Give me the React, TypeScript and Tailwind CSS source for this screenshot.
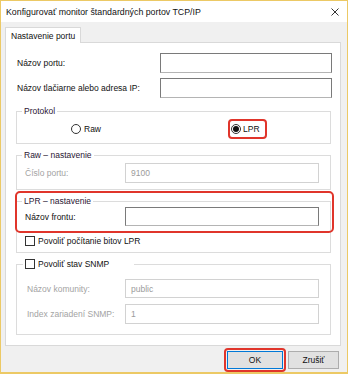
import React from "react";

function Input({ w, h = 20, disabled = false, value = "" }: { w: number; h?: number; disabled?: boolean; value?: string }) {
  return (
    <div
      className={
        disabled
          ? "bg-white border border-[#d2d2d2] flex items-center pl-[5px] text-[#9b9b9b]"
          : "bg-white border border-[#7a7a7a] border-b-[#b4b4b4] flex items-center pl-[5px]"
      }
      style={{ width: w, height: h }}
    >
      {value}
    </div>
  );
}

function Checkbox() {
  return <div className="w-[10px] h-[10px] border border-[#333333] bg-white shrink-0" />;
}

export default function App() {
  return (
    <div className="w-[348px] h-[374px] bg-[#f0f0f0] border-l border-t border-r border-b-2 border-[#ecc965] flex flex-col font-['Liberation_Sans',Arial,sans-serif] text-[8.5px] leading-[12px] text-[#111111]">
      <div className="h-[21px] bg-white flex items-center justify-between pl-[5px] pr-[8px] text-[8.8px] shrink-0">
        <span>Konfigurovať monitor štandardných portov TCP/IP</span>
        <svg width="8" height="8" viewBox="0 0 8 8">
          <path d="M0.5 0.5L7.5 7.5M7.5 0.5L0.5 7.5" stroke="#333333" strokeWidth="1" />
        </svg>
      </div>
      <div className="flex-1 flex flex-col pt-[5px] px-[4px]">
        <div className="flex">
          <div className="h-[16px] px-[5px] whitespace-nowrap bg-white border border-b-0 border-[#d9d9d9] flex items-center relative z-10 -mb-px">
            Nastavenie portu
          </div>
        </div>
        <div className="w-[336px] h-[304px] bg-white border border-[#d9d9d9] pt-[10px] pl-[10px] pr-[8px] flex flex-col">
          <div className="flex items-center justify-between">
            <span className="ml-[1px]">Názov portu:</span>
            <Input w={172} />
          </div>
          <div className="flex items-center justify-between mt-[5px]">
            <span className="ml-[1px]">Názov tlačiarne alebo adresa IP:</span>
            <Input w={172} />
          </div>

          <fieldset className="mt-[7px] mr-[1px] border border-[#dcdcdc] pb-[4px]">
            <legend className="ml-[5px] px-[2px] leading-[12px] text-[#2a1633]">Protokol</legend>
            <div className="grid grid-cols-[211px_1fr] items-center mt-[2px] h-[20px]">
              <div className="flex items-center pl-[54px] gap-[3px]">
                <div className="w-[10px] h-[10px] rounded-full border border-[#333333] bg-white" />
                <span>Raw</span>
              </div>
              <div className="flex">
                <div className="h-[20px] w-[39px] border-2 border-[#e0352b] rounded-[4px] pl-px flex items-center gap-[2px]">
                  <div className="w-[10px] h-[10px] rounded-full border border-[#333333] bg-white flex items-center justify-center">
                    <div className="w-[6px] h-[6px] rounded-full bg-[#111111]" />
                  </div>
                  <span>LPR</span>
                </div>
              </div>
            </div>
          </fieldset>

          <fieldset className="mt-[5px] mr-[1px] border border-[#dcdcdc] pb-[6px]">
            <legend className="ml-[5px] px-[2px] leading-[12px] text-[#2a1633]">Raw – nastavenie</legend>
            <div className="flex items-center mt-[2px]">
              <span className="w-[108px] pl-[8px] text-[#a3a3a3]">Číslo portu:</span>
              <Input w={194} disabled value="9100" />
            </div>
          </fieldset>

          <div className="relative mt-[5px] mr-[1px]">
            <fieldset className="border border-[#dcdcdc] pb-[4px]">
              <legend className="ml-[5px] px-[2px] leading-[12px] text-[#2a1633]">LPR – nastavenie</legend>
              <div className="flex items-center">
                <span className="w-[108px] pl-[8px]">Názov frontu:</span>
                <Input w={194} h={19} />
              </div>
              <div className="flex items-center gap-[3px] pl-[8px] mt-[8px] h-[14px]">
                <Checkbox />
                <span>Povoliť počítanie bitov LPR</span>
              </div>
            </fieldset>
            <div className="absolute left-[-1px] top-[-4px] w-[319px] h-[42px] border-2 border-[#e0352b] rounded-[5px]" />
          </div>

          <fieldset className="mt-[5px] mr-[1px] border border-[#dcdcdc] pb-[10px]">
            <legend className="ml-[6px] pl-[2px] w-[111px] leading-[12px]">
              <div className="flex items-center gap-[3px]">
                <Checkbox />
                <span>Povoliť stav SNMP</span>
              </div>
            </legend>
            <div className="flex items-center mt-[9px]">
              <span className="w-[108px] pl-[10px] text-[#a3a3a3]">Názov komunity:</span>
              <Input w={194} h={19} disabled value="public" />
            </div>
            <div className="flex items-center mt-[6px]">
              <span className="w-[108px] pl-[10px] text-[#a3a3a3]">Index zariadení SNMP:</span>
              <Input w={194} h={20} disabled value="1" />
            </div>
          </fieldset>
        </div>

        <div className="flex justify-end items-center gap-[5px] mt-[5px] mr-[4px]">
          <div className="relative">
            <div className="w-[56px] h-[18px] bg-[#e1e1e1] border border-[#0078d7] flex items-center justify-center">OK</div>
            <div className="absolute left-[-3px] top-[-3px] w-[62px] h-[24px] border-2 border-[#e0352b] rounded-[4px]" />
          </div>
          <div className="w-[51px] h-[18px] bg-[#e1e1e1] border border-[#adadad] flex items-center justify-center">Zrušiť</div>
        </div>
      </div>
    </div>
  );
}
